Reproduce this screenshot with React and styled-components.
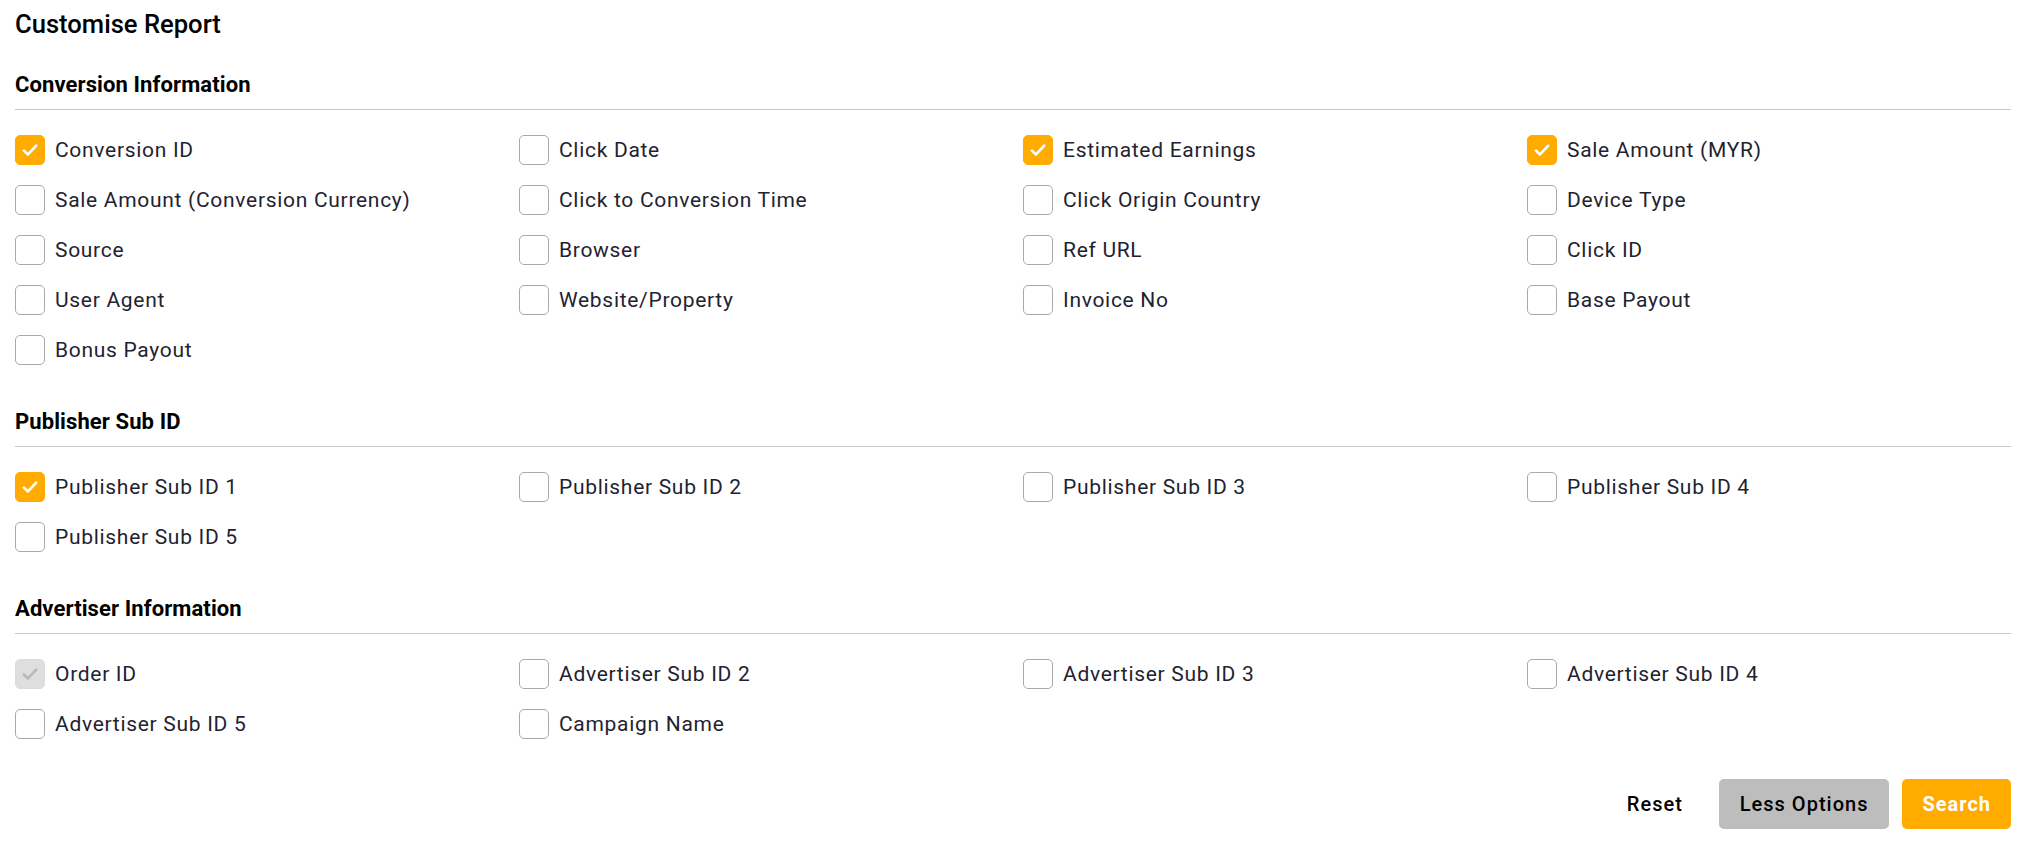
import React, { useState } from "react";
import styled, { createGlobalStyle } from "styled-components";

const GlobalStyle = createGlobalStyle`
  html, body { margin: 0; padding: 0; background: #ffffff; }
  body { font-family: Roboto, "Liberation Sans", Arial, sans-serif; }
  * { box-sizing: border-box; }
`;

const Page = styled.div`
  padding: 10px 12px 20px 15px;
  color: #000;
`;

const Title = styled.h1`
  margin: 0;
  font-size: 25.6px;
  line-height: 28px;
  font-weight: 500;
  color: #000;
`;

const Section = styled.section`
  margin-top: ${(p) => (p.first ? "35px" : "45px")};
`;

const SectionHeading = styled.h2`
  margin: 0;
  font-size: 22px;
  line-height: 24px;
  font-weight: 700;
  letter-spacing: 0.1px;
  color: #000;
  padding-bottom: 12px;
  border-bottom: 1px solid #c8c8c8;
`;

const Grid = styled.div`
  display: grid;
  grid-template-columns: repeat(4, 1fr);
  column-gap: 20px;
  row-gap: 20px;
  margin-top: 25px;
`;

const Option = styled.label`
  display: flex;
  align-items: center;
  gap: 10px;
  height: 30px;
  cursor: ${(p) => (p.disabled ? "default" : "pointer")};
  user-select: none;
`;

const Box = styled.span`
  flex: 0 0 30px;
  width: 30px;
  height: 30px;
  border-radius: 5px;
  display: flex;
  align-items: center;
  justify-content: center;
  border: 1px solid
    ${(p) => (p.disabled ? "#dcdcdc" : p.checked ? "#ffab00" : "#a9a9a9")};
  background: ${(p) =>
    p.disabled ? "#dedede" : p.checked ? "#ffab00" : "#ffffff"};
`;

const LabelText = styled.span`
  font-size: 21px;
  letter-spacing: 0.7px;
  color: #1f2330;
  white-space: nowrap;
`;

const Actions = styled.div`
  display: flex;
  justify-content: flex-end;
  align-items: center;
  gap: 13px;
  margin-top: 40px;
`;

const Button = styled.button`
  height: 50px;
  padding: ${(p) =>
    p.variant === "secondary"
      ? "0 21px"
      : p.variant === "primary"
      ? "0 20px"
      : "0 23px"};
  border: none;
  border-radius: 5px;
  font-family: Roboto, "Liberation Sans", Arial, sans-serif;
  font-size: 20px;
  letter-spacing: 1px;
  font-weight: ${(p) => (p.variant === "primary" ? 700 : 500)};
  color: ${(p) => (p.variant === "primary" ? "#ffffff" : "#000000")};
  background: ${(p) =>
    p.variant === "primary"
      ? "#ffab00"
      : p.variant === "secondary"
      ? "#bdbdbd"
      : "transparent"};
  cursor: pointer;
`;

const Check = ({ color }) => (
  <svg width="20" height="20" viewBox="0 0 20 20" aria-hidden="true">
    <path
      d="M3.8 10.6 L8 14.4 L16.2 5.6"
      fill="none"
      stroke={color}
      strokeWidth="2.7"
      strokeLinecap="round"
      strokeLinejoin="round"
    />
  </svg>
);

const sections = [
  {
    title: "Conversion Information",
    items: [
      ["Conversion ID", true],
      ["Click Date", false],
      ["Estimated Earnings", true],
      ["Sale Amount (MYR)", true],
      ["Sale Amount (Conversion Currency)", false],
      ["Click to Conversion Time", false],
      ["Click Origin Country", false],
      ["Device Type", false],
      ["Source", false],
      ["Browser", false],
      ["Ref URL", false],
      ["Click ID", false],
      ["User Agent", false],
      ["Website/Property", false],
      ["Invoice No", false],
      ["Base Payout", false],
      ["Bonus Payout", false],
    ],
  },
  {
    title: "Publisher Sub ID",
    items: [
      ["Publisher Sub ID 1", true],
      ["Publisher Sub ID 2", false],
      ["Publisher Sub ID 3", false],
      ["Publisher Sub ID 4", false],
      ["Publisher Sub ID 5", false],
    ],
  },
  {
    title: "Advertiser Information",
    items: [
      ["Order ID", true, true],
      ["Advertiser Sub ID 2", false],
      ["Advertiser Sub ID 3", false],
      ["Advertiser Sub ID 4", false],
      ["Advertiser Sub ID 5", false],
      ["Campaign Name", false],
    ],
  },
];

function CheckOption({ label, checked, disabled, onToggle }) {
  return (
    <Option disabled={disabled} onClick={disabled ? undefined : onToggle}>
      <Box checked={checked} disabled={disabled}>
        {checked && <Check color={disabled ? "#b9b9b9" : "#ffffff"} />}
      </Box>
      <LabelText>{label}</LabelText>
    </Option>
  );
}

export default function App() {
  const initial = {};
  sections.forEach((s) =>
    s.items.forEach(([label, checked]) => {
      initial[label] = checked;
    })
  );
  const [state, setState] = useState(initial);
  const toggle = (label) => setState((st) => ({ ...st, [label]: !st[label] }));

  return (
    <>
      <GlobalStyle />
      <Page>
        <Title>Customise Report</Title>
        {sections.map((s, i) => (
          <Section key={s.title} first={i === 0}>
            <SectionHeading>{s.title}</SectionHeading>
            <Grid>
              {s.items.map(([label, , disabled]) => (
                <CheckOption
                  key={label}
                  label={label}
                  checked={state[label]}
                  disabled={disabled}
                  onToggle={() => toggle(label)}
                />
              ))}
            </Grid>
          </Section>
        ))}
        <Actions>
          <Button type="button">Reset</Button>
          <Button type="button" variant="secondary">
            Less Options
          </Button>
          <Button type="button" variant="primary">
            Search
          </Button>
        </Actions>
      </Page>
    </>
  );
}
